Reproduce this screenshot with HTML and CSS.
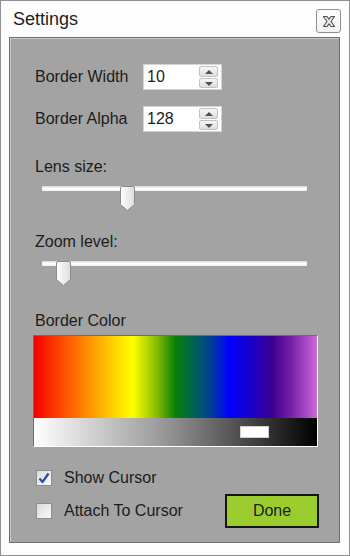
FILE: index.html
```html
<!DOCTYPE html>
<html lang="en">
<head>
    <meta charset="UTF-8">
    <meta name="viewport" content="width=device-width, initial-scale=1.0">
    <title>Settings</title>
    <link rel="stylesheet" href="styles.css">
</head>
<body>

    <div class="window">
        <div class="titlebar">
            <span class="title">Settings</span>
            <button type="button" class="close-button" title="Close">
                <svg width="12" height="11" viewBox="0 0 12 11">
                    <polygon points="0.5,0.5 4,0.5 6,3.2 8,0.5 11.5,0.5 8,5.5 11.5,10.5 8,10.5 6,7.8 4,10.5 0.5,10.5 4,5.5" fill="#ececec" stroke="#505050" stroke-width="1.1" stroke-linejoin="round"/>
                </svg>
            </button>
        </div>

        <div class="panel">
            <div class="field-row">
                <label for="border-width">Border Width</label>
                <div class="numeric">
                    <input type="text" id="border-width" value="10">
                    <div class="spinner">
                        <span class="spin up"></span>
                        <span class="spin down"></span>
                    </div>
                </div>
            </div>
            <div class="field-row second">
                <label for="border-alpha">Border Alpha</label>
                <div class="numeric">
                    <input type="text" id="border-alpha" value="128">
                    <div class="spinner">
                        <span class="spin up"></span>
                        <span class="spin down"></span>
                    </div>
                </div>
            </div>

            <div class="caption lens">Lens size:</div>
            <div class="slider">
                <div class="track"></div>
                <svg class="thumb" style="left: 78px" width="15" height="25" viewBox="0 0 15 25">
                    <defs>
                        <linearGradient id="thumbFill" x1="0" y1="0" x2="1" y2="0">
                            <stop offset="0" stop-color="#ffffff"/>
                            <stop offset="1" stop-color="#dcdcdc"/>
                        </linearGradient>
                    </defs>
                    <path d="M2 0.5 H13 Q14.5 0.5 14.5 2 V18.5 L7.5 24.5 L0.5 18.5 V2 Q0.5 0.5 2 0.5 Z" fill="url(#thumbFill)" stroke="#8c8c8c"/>
                </svg>
            </div>

            <div class="caption zoom">Zoom level:</div>
            <div class="slider">
                <div class="track"></div>
                <svg class="thumb" style="left: 14px" width="15" height="25" viewBox="0 0 15 25">
                    <path d="M2 0.5 H13 Q14.5 0.5 14.5 2 V18.5 L7.5 24.5 L0.5 18.5 V2 Q0.5 0.5 2 0.5 Z" fill="url(#thumbFill)" stroke="#8c8c8c"/>
                </svg>
            </div>

            <div class="caption color">Border Color</div>
            <div class="color-box">
                <div class="spectrum"></div>
                <div class="shades">
                    <span class="marker" style="left: 207px"></span>
                </div>
            </div>

            <div class="check-row first">
                <span class="checkbox">
                    <svg width="12" height="12" viewBox="0 0 12 12">
                        <path d="M1.5 6.5 L4.5 10 L10.5 1.5" fill="none" stroke="#2e4a9c" stroke-width="2.2" stroke-linejoin="round"/>
                    </svg>
                </span>
                <span class="check-label">Show Cursor</span>
            </div>
            <div class="check-row last">
                <span class="checkbox"></span>
                <span class="check-label">Attach To Cursor</span>
                <button type="button" class="done-button">Done</button>
            </div>
        </div>
    </div>

</body>
</html>
```

FILE: styles.css
```css
    body {
        font-family: "Liberation Sans", Arial, sans-serif;
        margin: 0;
        padding: 0;
        background-color: #ffffff;
    }

    .window {
        width: 350px;
        height: 556px;
        box-sizing: border-box;
        border: 1px solid #8f8f8f;
        background-color: #fdfdfd;
    }

    .titlebar {
        height: 36px;
        display: flex;
        align-items: center;
        justify-content: space-between;
        padding: 0 8px 0 12px;
    }

    .title {
        font-size: 18px;
        color: #1e1e1e;
    }

    .close-button {
        width: 25px;
        height: 24px;
        padding: 0;
        margin-top: 4px;
        display: flex;
        align-items: center;
        justify-content: center;
        border: 1px solid #8e8e8e;
        border-radius: 3px;
        background: linear-gradient(#ffffff, #f1f1f1);
    }

    .panel {
        height: 506px;
        box-sizing: border-box;
        margin: 0 9px 0 8px;
        padding: 26px 20px 0 23px;
        background-color: #a3a3a3;
        border: 1px solid #6f6f6f;
        box-shadow: inset 1px 1px 0 #c9c9c9, 0 1px 0 #ffffff;
        font-size: 16px;
        color: #1c1c1c;
    }

    .field-row {
        display: flex;
        align-items: center;
        height: 26px;
    }

    .field-row.second {
        margin-top: 16px;
    }

    .field-row label {
        width: 108px;
        margin-left: 2px;
    }

    .numeric {
        display: flex;
        width: 79px;
        height: 26px;
        box-sizing: border-box;
        background-color: #ffffff;
        border: 1px solid #d4d4d4;
    }

    .numeric input {
        width: 52px;
        border: none;
        padding: 0 0 0 3px;
        font-family: inherit;
        font-size: 16px;
        color: #1c1c1c;
        background: transparent;
        outline: none;
    }

    .spinner {
        display: flex;
        flex-direction: column;
        gap: 1px;
        width: 19px;
        padding: 1px 2px 1px 0;
    }

    .spin {
        flex: 1;
        position: relative;
        background: linear-gradient(#f6f6f6, #dedede);
        border: 1px solid #c2c2c2;
        border-radius: 2px;
    }

    .spin::after {
        content: "";
        position: absolute;
        left: 5px;
        top: 3px;
        border-left: 4px solid transparent;
        border-right: 4px solid transparent;
    }

    .spin.up::after {
        border-bottom: 4px solid #505050;
    }

    .spin.down::after {
        top: 3px;
        border-top: 4px solid #505050;
    }

    .caption {
        height: 20px;
        line-height: 20px;
        margin-left: 2px;
    }

    .caption.lens {
        margin-top: 25px;
    }

    .caption.zoom {
        margin-top: 21px;
    }

    .caption.color {
        margin-top: 25px;
    }

    .slider {
        position: relative;
        width: 265px;
        height: 25px;
        margin: 6px 0 0 9px;
    }

    .track {
        height: 5px;
        margin-top: 9px;
        border-radius: 1px;
        background: linear-gradient(#d6d6d6, #ffffff 45%, #f0f0f0);
    }

    .thumb {
        position: absolute;
        top: 0;
    }

    .color-box {
        width: 285px;
        height: 112px;
        box-sizing: border-box;
        margin-top: 4px;
        border: 1px solid;
        border-color: #6c6c6c #ffffff #ffffff #6c6c6c;
        display: flex;
        flex-direction: column;
    }

    .spectrum {
        height: 82px;
        background: linear-gradient(to right,
            #f40000 0%,
            #ff5a00 12%,
            #ffb400 24%,
            #ffe000 30%,
            #ffff00 35%,
            #8cc000 43%,
            #088008 50%,
            #00605a 57%,
            #003a9c 63%,
            #0000ff 69%,
            #1a00c8 77%,
            #3a0090 84%,
            #7a20a8 91%,
            #cc6ad8 100%);
    }

    .shades {
        flex: 1;
        position: relative;
        background: linear-gradient(to right, #ffffff, #9a9a9a 45%, #3a3a3a 80%, #000000);
    }

    .marker {
        position: absolute;
        top: 9px;
        width: 27px;
        height: 10px;
        background-color: #ffffff;
        box-shadow: 0 0 0 1px #d0d0d0;
    }

    .check-row {
        display: flex;
        align-items: center;
        margin-left: 3px;
    }

    .check-row.first {
        height: 20px;
        margin-top: 21px;
    }

    .check-row.last {
        height: 34px;
        margin-top: 6px;
    }

    .checkbox {
        width: 16px;
        height: 16px;
        box-sizing: border-box;
        display: flex;
        align-items: center;
        justify-content: center;
        border: 1px solid #8d8d8d;
        background: linear-gradient(135deg, #dcdcdc, #f8f8f8);
    }

    .check-label {
        margin-left: 12px;
    }

    .done-button {
        margin-left: auto;
        width: 94px;
        height: 34px;
        box-sizing: border-box;
        border: 2px solid #151515;
        background-color: #9bcc2e;
        font-family: inherit;
        font-size: 16px;
        color: #1c1c1c;
        cursor: pointer;
    }
```
